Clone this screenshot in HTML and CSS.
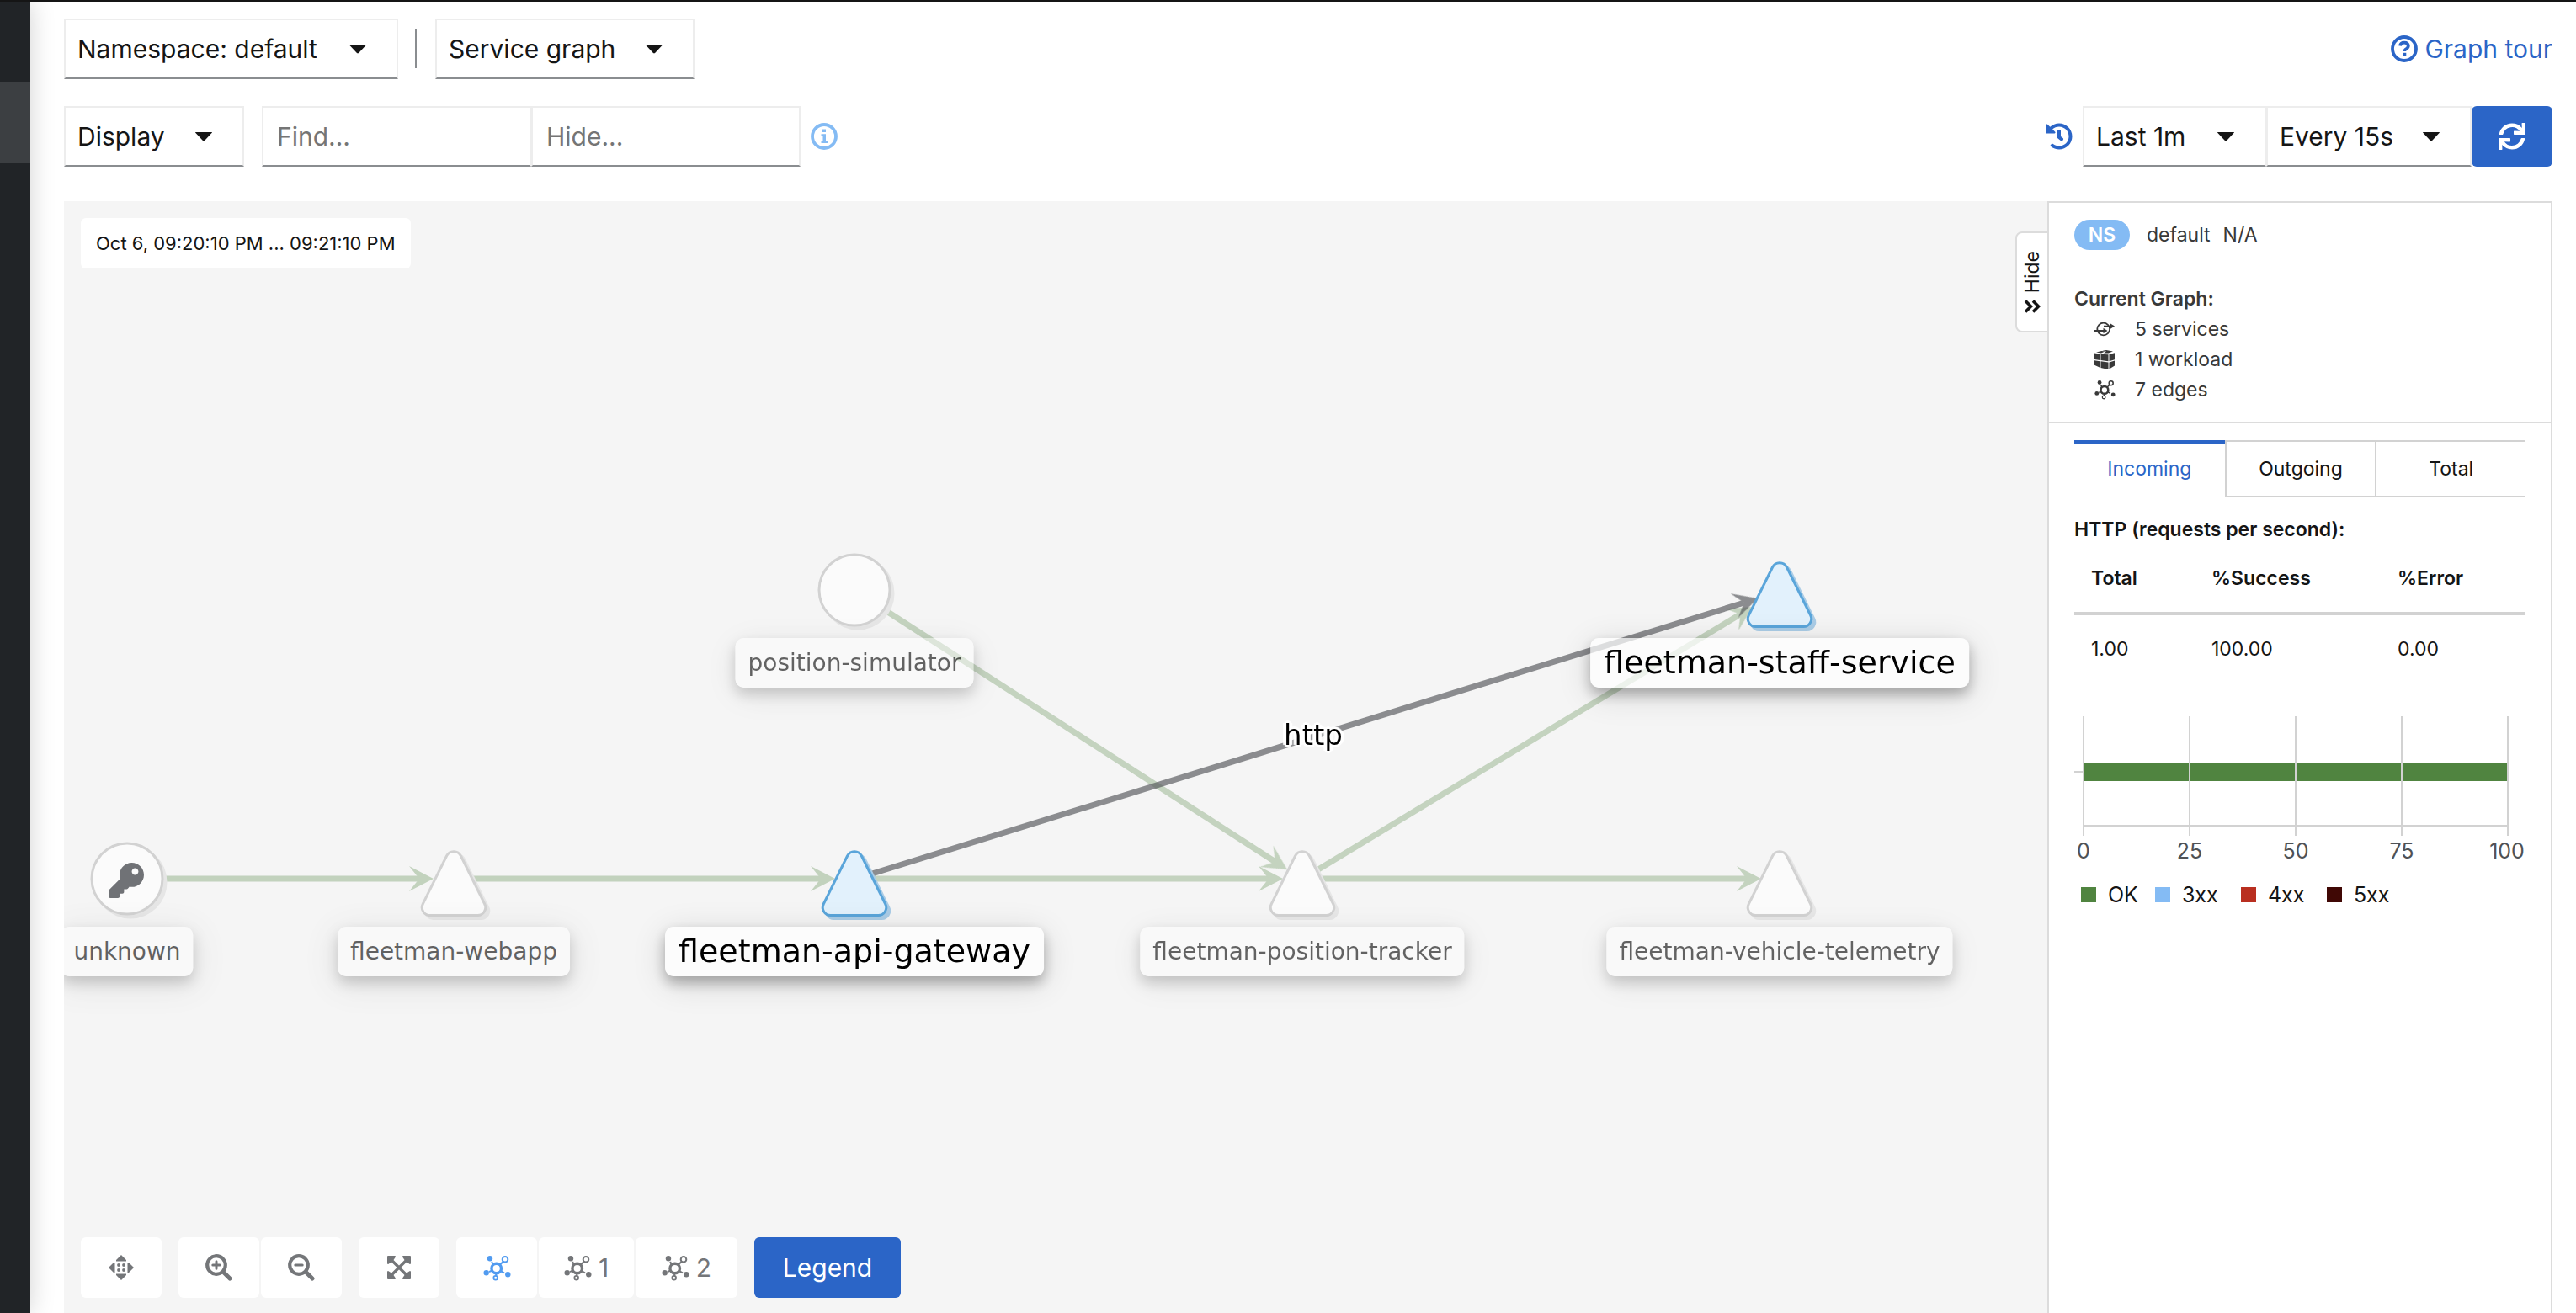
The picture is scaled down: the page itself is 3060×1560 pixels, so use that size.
FILE: index.html
```
<!DOCTYPE html>
<html lang="en">
<head>
<meta charset="utf-8">
<meta name="viewport" content="width=device-width, initial-scale=1">
<title>Service graph</title>
<link rel="stylesheet" href="styles.css">
</head>
<body>
<svg class="defs" aria-hidden="true">
  <defs>
    <symbol id="topology" viewBox="0 0 33 31">
      <g fill="none" stroke="currentColor">
        <circle cx="15.7" cy="16" r="5.8" stroke-width="3.4"/>
        <circle cx="26" cy="5.3" r="3.3" stroke-width="2"/>
        <circle cx="14.7" cy="27.3" r="2.4" stroke-width="1.7"/>
        <path stroke-width="2" d="M20 11.5l3.8-3.8M15.2 23v2.2M20.5 19l4.5 2.3M11.5 11l-1.4-3M10.5 18.5l-3.5 1.6"/>
      </g>
      <g fill="currentColor"><circle cx="8" cy="4.3" r="3.2"/><circle cx="3.7" cy="21.3" r="3.2"/><circle cx="29.3" cy="23.3" r="3.2"/></g>
    </symbol>
    <symbol id="service" viewBox="0 0 24 20">
      <circle cx="10.7" cy="10" r="7.4" fill="none" stroke="currentColor" stroke-width="1.8"/>
      <path d="M0 12h13M11 6.600h9" fill="none" stroke="currentColor" stroke-width="1.8"/>
      <path d="M10.500 8.800l5 3.200-5 3.200zM19 3.400l5 3.200-5 3.200z" fill="currentColor"/>
    </symbol>
    <symbol id="workload" viewBox="0 0 24 23">
      <path fill="currentColor" d="M0 3.500l6.500 1v7.500L0 11zM7.500 4.700l9 .5v8l-9-1.200zM17.500 5l6.500-1.800v8l-6.500 2zM0 12.200l6.500 1v7.500L0 17.800zM7.500 13.300l9 1.200V23l-9-2zM17.500 14.500L24 12.400v6l-6.500 4zM2 2.600L8.500 1l4 .6-4.500 2zM9.500.8L14 0l8 1.600-5.500 2L11 3.500l3-2z"/>
    </symbol>
    <path id="triangle" d="M-8.500-27A9.500 9.500 0 0 1 8.500-27L36.700 30A9.300 9.300 0 0 1 28 43.500H-28A9.300 9.300 0 0 1-36.700 30Z"/>
    <path id="arrow" d="M0 0L-29-15L-17 0L-29 15Z"/>
    <g id="service-node"><use href="#triangle" class="node-shadow" x="4" y="4"/><use href="#triangle" class="node-shape"/></g>
    <g id="circle-node"><circle class="node-shadow" cx="4" cy="4" r="42"/><circle class="node-shape" r="42"/></g>
  </defs>
</svg>

<nav class="sidebar" aria-label="Main"><a class="sidebar-item" href="#graph" aria-label="Graph"></a></nav>

<main class="page">
  <div class="toolbar">
    <div class="group">
      <span class="select w-namespace"><select aria-label="Namespace"><option>Namespace: default</option></select></span>
      <span class="divider"></span>
      <span class="select w-graph"><select aria-label="Graph type"><option>Service graph</option></select></span>
    </div>
    <a class="tour" href="#tour">
      <svg class="icon-32" viewBox="0 0 32 32" aria-hidden="true"><circle cx="16" cy="16" r="14" fill="none" stroke="currentColor" stroke-width="3.800"/><path d="M11 12.500Q11.500 8.600 16 8.600T20.800 12.500Q20.800 14.600 18.500 16T16.300 19" fill="none" stroke="currentColor" stroke-width="3.800"/><path fill="currentColor" d="M14.300 20.800h4v3.800h-4z"/></svg>
      Graph tour</a>
  </div>

  <div class="toolbar">
    <div class="group">
      <span class="select w-display"><select aria-label="Display"><option>Display</option></select></span>
      <div class="inputs">
        <input type="text" aria-label="Find" placeholder="Find...">
        <input type="text" aria-label="Hide" placeholder="Hide...">
      </div>
      <svg class="icon-32 info" viewBox="0 0 32 32" role="img" aria-label="Help"><circle cx="16" cy="16" r="14" fill="none" stroke="currentColor" stroke-width="3.800"/><path fill="currentColor" d="M14 7.500h4V11h-4zM12.500 13.200H18v8.400h2V24h-7.500v-2.400h2v-6h-2z"/></svg>
    </div>
    <div class="group">
      <svg class="icon-32 history" viewBox="0 0 512 512" role="img" aria-label="Replay"><path fill="currentColor" d="M504 255.531c.253 136.640-111.180 248.372-247.820 248.468-59.015.042-113.223-20.530-155.822-54.911-11.077-8.940-11.905-25.541-1.839-35.607l11.267-11.267c8.609-8.609 22.353-9.551 31.891-1.984C173.062 425.135 212.781 440 256 440c101.705 0 184-82.311 184-184 0-101.705-82.311-184-184-184-48.814 0-93.149 18.969-126.068 49.932l50.754 50.754c10.080 10.080 2.941 27.314-11.313 27.314H24c-8.837 0-16-7.163-16-16V38.627c0-14.254 17.234-21.393 27.314-11.314l49.372 49.372C129.209 34.136 189.552 8 256 8c136.810 0 247.747 110.780 248 247.531zm-180.912 78.784l9.823-12.630c8.138-10.463 6.253-25.542-4.210-33.679L288 256.349V152c0-13.255-10.745-24-24-24h-16c-13.255 0-24 10.745-24 24v135.651l65.409 50.874c10.463 8.137 25.541 6.253 33.679-4.210z"/></svg>
      <span class="select w-last"><select aria-label="Duration"><option>Last 1m</option></select></span>
      <span class="select w-every"><select aria-label="Refresh interval"><option>Every 15s</option></select></span>
      <button class="refresh" type="button" aria-label="Refresh"><svg class="icon-32" viewBox="0 0 512 512" aria-hidden="true"><path fill="currentColor" d="M440.650 12.570l4 82.770A247.160 247.160 0 0 0 255.830 8C134.730 8 33.910 94.920 12.290 209.820A12 12 0 0 0 24.090 224h49.050a12 12 0 0 0 11.670-9.260 175.910 175.910 0 0 1 317-56.940l-101.460-4.860a12 12 0 0 0-12.570 12v47.410a12 12 0 0 0 12 12H500a12 12 0 0 0 12-12V12a12 12 0 0 0-12-12h-47.370a12 12 0 0 0-11.980 12.570zM255.830 432a175.610 175.610 0 0 1-146-77.800l101.800 4.870a12 12 0 0 0 12.570-12v-47.400a12 12 0 0 0-12-12H12a12 12 0 0 0-12 12V500a12 12 0 0 0 12 12h47.350a12 12 0 0 0 12-12.600l-4.150-82.570A247.170 247.170 0 0 0 255.830 504c121.110 0 221.930-86.920 243.550-201.820a12 12 0 0 0-11.800-14.180h-49.050a12 12 0 0 0-11.670 9.260A175.860 175.860 0 0 1 255.830 432z"/></svg></button>
    </div>
  </div>

  <div class="content">
    <section class="stage" id="graph" aria-label="Service graph">
      <svg class="edges" width="2357" height="1000" viewBox="0 0 2357 1000" aria-hidden="true">
        <g class="edge"><path d="M119 805H423"/><use href="#arrow" transform="translate(439 805)"/></g>
        <g class="edge"><path d="M484 805H900"/><use href="#arrow" transform="translate(916 805)"/></g>
        <g class="edge"><path d="M960 805H1432"/><use href="#arrow" transform="translate(1448 805)"/></g>
        <g class="edge"><path d="M1492 805H2000"/><use href="#arrow" transform="translate(2016 805)"/></g>
        <g class="edge"><path d="M977 487L1439 785"/><use href="#arrow" transform="translate(1453 794) rotate(32.500)"/></g>
        <g class="edge"><path d="M1490 794L1991 491"/><use href="#arrow" transform="translate(2006 482) rotate(-31.500)"/></g>
        <g class="edge edge-selected"><path d="M960 799L1996 477"/><use href="#arrow" transform="translate(2012 472) rotate(-17.300)"/></g>
        <use href="#circle-node" transform="translate(75 805)"/>
        <g transform="translate(53 786) scale(.082)"><path class="key" d="M512 176C512 273.200 433.200 352 336 352c-11.220 0-22.190-1.060-32.830-3.070l-24.010 27.010A24 24 0 0 1 261.220 384H224v40c0 13.250-10.750 24-24 24h-40v40c0 13.250-10.750 24-24 24H24c-13.260 0-24-10.750-24-24v-78.060c0-6.360 2.530-12.470 7.030-16.970l161.800-161.800C163.110 213.810 160 195.270 160 176 160 78.800 238.800 0 336 0 433.490 0 512 78.510 512 176zM336 128c0 26.510 21.490 48 48 48s48-21.490 48-48-21.490-48-48-48-48 21.490-48 48z"/></g>
        <use href="#service-node" transform="translate(463 805)"/>
        <use href="#circle-node" transform="translate(939 462)"/>
        <use href="#service-node" class="selected" transform="translate(939 805)"/>
        <use href="#service-node" transform="translate(1471 805)"/>
        <use href="#service-node" class="selected" transform="translate(2038 462)"/>
        <use href="#service-node" transform="translate(2038 805)"/>
      </svg>
      <span class="edge-label">http</span>
      <span class="label unknown">unknown</span>
      <span class="label webapp">fleetman-webapp</span>
      <span class="label simulator">position-simulator</span>
      <span class="label label-selected gateway">fleetman-api-gateway</span>
      <span class="label tracker">fleetman-position-tracker</span>
      <span class="label label-selected staff">fleetman-staff-service</span>
      <span class="label telemetry">fleetman-vehicle-telemetry</span>

      <time class="timestamp">Oct 6, 09:20:10 PM ... 09:21:10 PM</time>

      <div class="tools">
        <button class="tool" type="button" aria-label="Drag"><svg width="30" height="30" viewBox="0 0 30 30"><path fill="currentColor" d="M15 0l6 6v1.500H9V6zM15 30l6-6v-1.500H9V24zM0 15l6-6h1.500v12H6zM30 15l-6-6h-1.500v12H24z"/><g fill="currentColor"><circle cx="12" cy="12" r="1.900"/><circle cx="18" cy="12" r="1.900"/><circle cx="12" cy="18" r="1.900"/><circle cx="18" cy="18" r="1.900"/></g></svg></button>
        <div class="tool-group">
          <button class="tool" type="button" aria-label="Zoom in"><svg width="32" height="32" viewBox="0 0 32 32"><g fill="none" stroke="currentColor"><circle cx="13" cy="13" r="10.800" stroke-width="4.200"/><path stroke-width="5" stroke-linecap="round" d="M22.500 22.500l6.500 6.500"/><path stroke-width="3" stroke-linecap="round" d="M8.800 13h8.400M13 8.800v8.400"/></g></svg></button>
          <button class="tool" type="button" aria-label="Zoom out"><svg width="32" height="32" viewBox="0 0 32 32"><g fill="none" stroke="currentColor"><circle cx="13" cy="13" r="10.800" stroke-width="4.200"/><path stroke-width="5" stroke-linecap="round" d="M22.500 22.500l6.500 6.500"/><path stroke-width="3" stroke-linecap="round" d="M8.800 13h8.400"/></g></svg></button>
        </div>
        <button class="tool" type="button" aria-label="Fit to screen"><svg width="28" height="28" viewBox="0 0 28 28"><path stroke="currentColor" stroke-width="3.400" d="M4 4l20 20M24 4L4 24"/><path fill="currentColor" stroke="currentColor" stroke-linejoin="round" stroke-width="2" d="M1 1h8L7 4 4 7 1 9zM27 1h-8l2 3 3 3 3 2zM1 27h8l-2-3-3-3-3-2zM27 27h-8l2-3 3-3 3-2z"/></svg></button>
        <div class="tool-group">
          <button class="tool tool-active" type="button" aria-label="Default layout"><svg width="33" height="31"><use href="#topology"/></svg></button>
          <button class="tool tool-one" type="button" aria-label="Layout 1"><svg width="33" height="31"><use href="#topology"/></svg>1</button>
          <button class="tool tool-two" type="button" aria-label="Layout 2"><svg width="33" height="31"><use href="#topology"/></svg>2</button>
        </div>
        <button class="legend-button" type="button">Legend</button>
      </div>
    </section>

    <aside class="panel">
      <button class="hide-tab" type="button"><svg width="20" height="16" viewBox="0 0 20 16" aria-hidden="true"><path d="M2 1.500l6.500 6.500L2 14.500M11 1.500l6.500 6.500L11 14.500" fill="none" stroke="currentColor" stroke-width="3.600"/></svg><span class="hide-text">Hide</span></button>
      <section class="summary">
        <div class="ns-row"><span class="badge">NS</span><span class="ns-name">default</span><span>N/A</span></div>
        <h2 class="heading">Current Graph:</h2>
        <ul class="counts">
          <li><svg width="24" height="20"><use href="#service"/></svg>5 services</li>
          <li><svg width="24" height="23"><use href="#workload"/></svg>1 workload</li>
          <li><svg width="25" height="24"><use href="#topology"/></svg>7 edges</li>
        </ul>
      </section>
      <section class="traffic">
        <div class="tabs" role="tablist">
          <button class="tab tab-current" type="button" role="tab" aria-selected="true">Incoming</button>
          <button class="tab" type="button" role="tab">Outgoing</button>
          <button class="tab" type="button" role="tab">Total</button>
        </div>
        <h2 class="heading">HTTP (requests per second):</h2>
        <table class="rates">
          <thead><tr><th class="c-total">Total</th><th class="c-success">%Success</th><th>%Error</th></tr></thead>
          <tbody><tr><td>1.00</td><td>100.00</td><td>0.00</td></tr></tbody>
        </table>
        <svg class="chart" width="536" height="196" viewBox="0 0 536 196" role="img" aria-label="100 percent OK">
          <rect class="bar" x="11" y="65" width="504" height="22"/>
          <path class="grid" d="M11 10V152M137 10V152M263 10V152M389 10V152M515 10V152M10 140H516M0 76H11"/>
          <g class="ticks"><text x="11" y="179">0</text><text x="137" y="179">25</text><text x="263" y="179">50</text><text x="389" y="179">75</text><text x="514" y="179">100</text></g>
        </svg>
        <ul class="legend">
          <li class="l-ok">OK</li><li class="l-3xx">3xx</li><li class="l-4xx">4xx</li><li class="l-5xx">5xx</li>
        </ul>
      </section>
    </aside>
  </div>
</main>
</body>
</html>
```
FILE: styles.css
```
* { box-sizing: border-box; }

body {
  display: flex;
  min-height: 100vh;
  margin: 0;
  border-top: 2px solid #151515;
  background: #fff;
  color: #151515;
  font: 23px/36px Inter, "Liberation Sans", sans-serif;
}

button, select, input { margin: 0; font: inherit; color: inherit; }
button { padding: 0; border: 0; cursor: pointer; }
svg { display: block; flex: none; }
ul { margin: 0; padding: 0; list-style: none; }
.defs { position: absolute; width: 0; height: 0; }

/* Navigation rail */
.sidebar {
  z-index: 1;
  flex: none;
  width: 36px;
  padding-top: 96px;
  background: #212427;
  box-shadow: 0 0 30px rgba(0, 0, 0, .18);
}
.sidebar-item { display: block; height: 96px; background: #3c3f42; }

.page {
  display: flex;
  flex: 1;
  flex-direction: column;
  min-width: 0;
  padding: 20px 28px 0 40px;
}

/* Toolbars */
.toolbar {
  display: flex;
  align-items: center;
  justify-content: space-between;
  height: 72px;
  margin-bottom: 32px;
  font-size: 30px;
}
.group { display: flex; align-items: center; }
.select { display: grid; align-items: center; height: 72px; }
.select select, .select::after { grid-area: 1 / 1; }
.select select {
  width: 100%;
  height: 72px;
  padding: 0 14px;
  appearance: none;
  border: 2px solid #ededed;
  border-bottom-color: #8a8d90;
  border-radius: 0;
  background: #fff;
}
.select::after {
  content: "";
  justify-self: end;
  width: 20px;
  height: 11px;
  margin-right: 38px;
  background: #151515;
  clip-path: polygon(4% 0, 96% 0, 100% 10%, 54% 97%, 46% 97%, 0 10%);
  pointer-events: none;
}
.w-namespace { width: 397px; }
.w-graph { width: 308px; }
.w-display { width: 214px; margin-right: 21px; }
.w-last { width: 218px; }
.w-every { width: 244px; }
.divider { width: 2px; height: 46px; margin: 0 22px 0 20px; background: #8a8d90; }
.inputs { display: flex; }
.inputs input {
  width: 320px;
  height: 72px;
  padding: 0 16px;
  border: 2px solid #ededed;
  border-bottom-color: #8a8d90;
  border-radius: 0;
  background: #fff;
}
.inputs input::placeholder { color: #757575; opacity: 1; }
.icon-32 { width: 32px; height: 32px; }
.info { margin-left: 12px; color: #84bbf4; }
.history { margin-right: 12px; color: #2b65c7; }
.tour { display: flex; align-items: center; gap: 8px; color: #2b65c7; text-decoration: none; }
.refresh {
  display: flex;
  align-items: center;
  justify-content: center;
  width: 96px;
  height: 72px;
  border-radius: 6px;
  background: #2b65c7;
  color: #fff;
}

.content { display: flex; flex: 1; min-height: 1000px; margin-top: 9px; }

/* Graph canvas */
.stage {
  position: relative;
  display: flex;
  flex: 1;
  flex-direction: column;
  align-items: flex-start;
  justify-content: space-between;
  min-width: 0;
  padding: 20px 20px 18px;
  overflow: hidden;
  background: #f5f5f5;
}
.edges { position: absolute; top: 0; left: 0; }
.edge { opacity: .3; fill: #508440; }
.edge path { stroke: #508440; stroke-width: 7; }
#arrow { stroke: none; }
.edge-selected { opacity: .65; fill: #515357; }
.edge-selected path { stroke: #515357; }
.selected { --fill: #e2f1fc; --line: #5aa5da; --shade: #aacce6; }
.node-shape { fill: var(--fill, #fbfbfb); stroke: var(--line, #d2d2d2); stroke-width: 3; }
.node-shadow { fill: var(--shade, #e6e6e6); stroke: var(--shade, #e6e6e6); stroke-width: 3; }
.key { fill: #707276; }

.label {
  position: absolute;
  padding: 0 15px;
  border-radius: 10px;
  background: rgba(255, 255, 255, .7);
  box-shadow: 0 8px 16px rgba(0, 0, 0, .28), 0 8px 40px rgba(0, 0, 0, .14);
  color: #000;
  font: 28px/59px "DejaVu Sans", sans-serif;
  white-space: nowrap;
  opacity: .6;
  transform: translateX(-50%);
}
.label-selected { padding: 0 16px; font-size: 38px; opacity: 1; }
.unknown { left: 75px; top: 862px; }
.webapp { left: 463px; top: 862px; }
.simulator { left: 939px; top: 519px; }
.gateway { left: 939px; top: 862px; }
.tracker { left: 1471px; top: 862px; }
.staff { left: 2038px; top: 519px; }
.telemetry { left: 2038px; top: 862px; }
.edge-label {
  position: absolute;
  top: 610px;
  left: 1484px;
  color: #000;
  font: 34px/48px "DejaVu Sans", sans-serif;
  text-shadow: 0 0 2px #fff, 2px 2px 1px #fff, -2px -2px 1px #fff, 2px -2px 1px #fff, -2px 2px 1px #fff, 4px 0 1px #fff, -4px 0 1px #fff, 0 3px 1px #fff, 0 -3px 1px #fff;
  transform: translateX(-50%);
}

.timestamp {
  z-index: 1;
  padding: 12px 18px;
  border-radius: 6px;
  background: #fff;
  font-size: 22px;
}

.tools { z-index: 1; display: flex; gap: 20px; font-size: 30px; }
.tool-group { display: flex; gap: 2px; }
.tool {
  display: flex;
  align-items: center;
  justify-content: center;
  gap: 8px;
  width: 96px;
  height: 72px;
  border-radius: 6px;
  background: #fff;
  color: #747679;
}
.tool-active { color: #519bf0; }
.tool-one { width: 113px; }
.tool-two { width: 121px; }
.legend-button { width: 174px; height: 72px; border-radius: 6px; background: #2b65c7; color: #fff; }

/* Summary panel */
.panel {
  position: relative;
  flex: none;
  width: 600px;
  border: solid #dcdcdc;
  border-width: 2px 2px 0;
}
.hide-tab {
  position: absolute;
  top: 34px;
  left: -40px;
  display: flex;
  flex-direction: column-reverse;
  align-items: center;
  justify-content: center;
  gap: 8px;
  width: 40px;
  height: 120px;
  border: 2px solid #dcdcdc;
  border-radius: 8px 0 0 8px;
  background: #fff;
}
.hide-text { writing-mode: vertical-rl; transform: rotate(180deg); }
.summary { padding: 20px 30px; border-bottom: 2px solid #dcdcdc; color: #393939; }
.ns-row { display: flex; align-items: center; gap: 15px; margin-bottom: 40px; }
.badge {
  width: 66px;
  border-radius: 18px;
  background: #84bbf4;
  color: #fff;
  font-weight: 600;
  text-align: center;
}
.ns-name { padding-left: 5px; }
.heading { margin: 0; font-size: 23px; font-weight: 600; }
.counts li { display: grid; grid-template-columns: 48px 1fr; align-items: center; padding-left: 24px; }
.traffic { padding: 20px 30px; }
.tabs { display: grid; grid-template-columns: repeat(3, 1fr); margin-bottom: 20px; }
.tab {
  height: 68px;
  border: 0 solid #d2d2d2;
  border-width: 2px 0 2px 2px;
  background: #fff;
}
.tab-current { border-width: 4px 0; border-color: #2b65c7 transparent transparent; color: #2b65c7; }
.rates { width: 100%; border-collapse: collapse; table-layout: fixed; }
.rates th, .rates td { height: 82px; padding: 0 0 0 20px; text-align: left; }
.rates th { font-weight: 600; }
.rates thead { border-bottom: 4px solid #d2d2d2; }
.c-total { width: 143px; }
.c-success { width: 221px; }
.chart { margin-top: 30px; }
.bar { fill: #508440; }
.grid { fill: none; stroke: #d2d2d2; stroke-width: 2; }
.ticks { fill: #4f5255; font-size: 25px; text-anchor: middle; }
.legend { display: flex; gap: 20px; padding: 8px 0 0 8px; font-size: 25px; }
.legend li { display: flex; align-items: center; gap: 14px; min-width: 82px; }
.legend .l-ok { min-width: 0; }
.legend li::before { content: ""; width: 18px; height: 18px; background: #508440; }
.legend .l-3xx::before { background: #84bbf4; }
.legend .l-4xx::before { background: #b92f20; }
.legend .l-5xx::before { background: #400805; }
```
